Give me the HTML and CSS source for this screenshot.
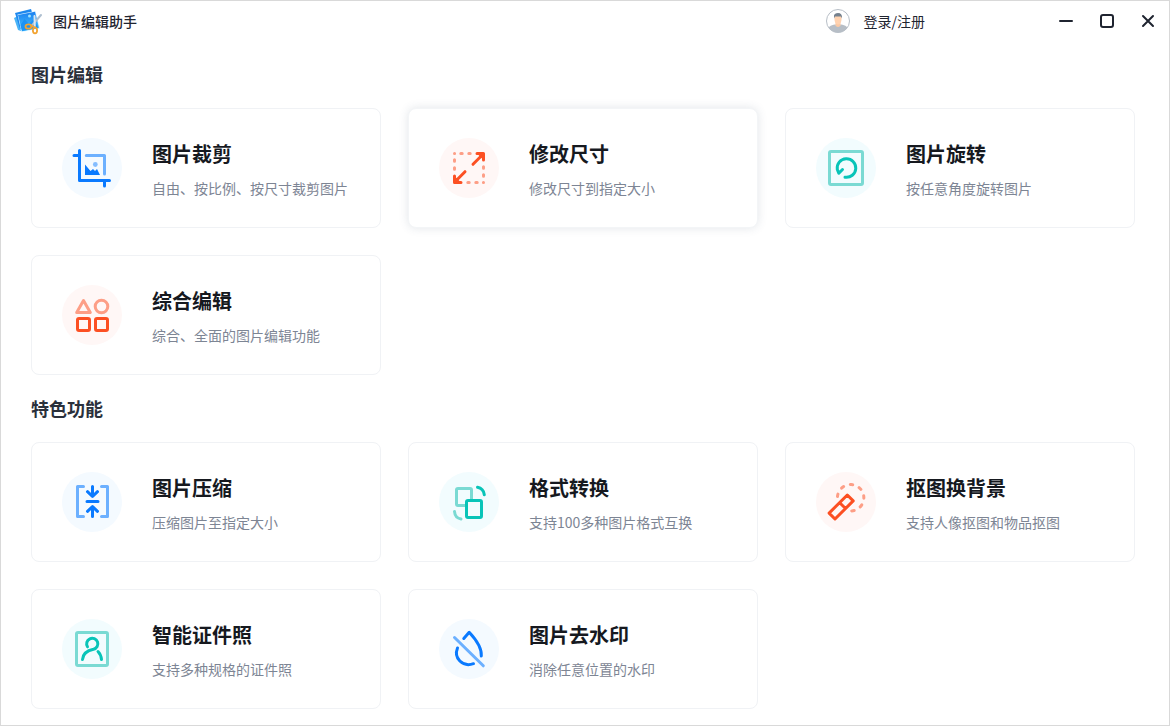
FILE: index.html
```html
<!DOCTYPE html>
<html lang="zh-CN">

<head>
    <meta charset="utf-8" />
    <title>图片编辑助手</title>
    <meta name="viewport" content="width=device-width, initial-scale=1">
    <link rel="stylesheet" href="styles.css">
</head>

<body>
    <header class="titlebar">
        <svg class="logo" viewBox="0 0 28 28" aria-hidden="true">
            <defs>
                <linearGradient id="photo" x1="0" y1="0" x2="0" y2="1">
                    <stop offset="0" stop-color="#1b7ff0" />
                    <stop offset="1" stop-color="#45c6ff" />
                </linearGradient>
            </defs>
            <path d="M0 11L4 9L7 24L4 23Z" fill="#4bb4f7" />
            <path d="M1 6L17 2L22 18L6 22Z" fill="#1e88ee" />
            <path d="M3.5 7.5L21.5 4L26 21.5L7.5 25Z" fill="#d9f1ff" />
            <path d="M4 8L21 4.7L25 21L8 24.3Z" fill="url(#photo)" />
            <path d="M6.5 18L10.500 12L15 17L18.500 13L23.5 18.500L24 21L8 24Z" fill="#1c93f5" />
            <circle cx="15.5" cy="9" r="1.500" fill="#9fe2ff" />
            <path d="M27 8L17.5 19" stroke="#aebfd0" stroke-width="2" stroke-linecap="round" />
            <path d="M20.5 9L20.8 19" stroke="#dce6ee" stroke-width="2" stroke-linecap="round" />
            <g fill="none" stroke="#f2a331" stroke-width="1.8">
                <ellipse cx="14.5" cy="19.5" rx="3" ry="2.2" />
                <ellipse cx="21" cy="23.5" rx="2.1" ry="2.8" />
                <path d="M17 18.5L21 20.5" />
            </g>
        </svg>
        <h1 class="app-name">图片编辑助手</h1>
        <a href="#login" class="login">
            <svg class="avatar" viewBox="0 0 24 24" aria-hidden="true">
                <defs>
                    <clipPath id="face"><circle cx="12" cy="12" r="11.5" /></clipPath>
                </defs>
                <circle cx="12" cy="12" r="11.5" fill="#fff" />
                <g clip-path="url(#face)">
                    <path d="M0 24C1 18 5 16 9 15.5H15C19 16 23 18 24 24Z" fill="#b7bec6" />
                    <path d="M9.5 13H14.5V16.5Q12 19.5 9.5 16.5Z" fill="#fbc9a5" />
                    <path d="M8.5 7H15.5V11Q15 15 12 15.5Q9 15 8.5 11Z" fill="#ffd2b0" />
                    <path d="M8 9.5V6.5Q8.5 4 12 4Q16.5 4 16 9.5L15 7.5H9Z" fill="#75818e" />
                </g>
                <circle cx="12" cy="12" r="11.5" fill="none" stroke="#b7bec6" />
            </svg>
            登录/注册
        </a>
        <div class="window-buttons">
            <button type="button" aria-label="最小化">
                <svg viewBox="0 0 16 16"><path d="M2 8H14" /></svg>
            </button>
            <button type="button" aria-label="最大化">
                <svg viewBox="0 0 16 16"><rect x="2" y="2" width="12" height="12" rx="2" /></svg>
            </button>
            <button type="button" aria-label="关闭">
                <svg viewBox="0 0 16 16"><path d="M3 3L13 13M13 3L3 13" /></svg>
            </button>
        </div>
    </header>

    <main class="content">
        <section class="group">
            <h2>图片编辑</h2>
            <div class="cards">
                <a href="#crop" class="card">
                    <svg class="icon blue" viewBox="0 0 60 60" aria-hidden="true">
                        <path class="light" d="M24.3 17.5H42.5V36" />
                        <path d="M12 17.5H17.5M17.5 12.5V42.5H47.5M42.5 42.5V48" />
                        <circle class="light-dot" cx="33.3" cy="26.5" r="2.4" />
                        <path class="solid" d="M23 26.5L28.5 33L31 31L33 33L35 31L38 37H23Z" />
                    </svg>
                    <div class="text">
                        <h3>图片裁剪</h3>
                        <p>自由、按比例、按尺寸裁剪图片</p>
                    </div>
                </a>
                <a href="#resize" class="card active">
                    <svg class="icon red" viewBox="0 0 60 60" aria-hidden="true">
                        <path class="light" d="M15.5 15.5H15.6M21.8 15.5H23.2M29.8 15.5H31.2M15.5 21.8V23.2M15.5 29.8V31.2M28.8 44.5H30.2M36.8 44.5H38.2M44.5 28.8V30.2M44.5 36.8V38.2M44.4 44.5H44.5" />
                        <path d="M34 26.3L43 17.3M38 15.5H44.5V22M26 33.7L17 42.7M15.5 38V44.5H22" />
                        <path class="solid" d="M38 15.5H44.5V22ZM15.5 38V44.5H22Z" />
                    </svg>
                    <div class="text">
                        <h3>修改尺寸</h3>
                        <p>修改尺寸到指定大小</p>
                    </div>
                </a>
                <a href="#rotate" class="card">
                    <svg class="icon teal" viewBox="0 0 60 60" aria-hidden="true">
                        <rect class="light" x="13.5" y="13.5" width="33" height="33" rx="1.5" />
                        <path d="M29 39.2A9.3 9.3 0 1 0 21.3 31.5L22.8 35.3L26.5 31.5" />
                    </svg>
                    <div class="text">
                        <h3>图片旋转</h3>
                        <p>按任意角度旋转图片</p>
                    </div>
                </a>
                <a href="#edit" class="card">
                    <svg class="icon red" viewBox="0 0 60 60" aria-hidden="true">
                        <path class="light" d="M21.5 15.5L28.3 27.5H14.7Z" />
                        <circle class="light" cx="39.5" cy="21.5" r="6.3" />
                        <rect x="15.5" y="33.5" width="12" height="12" rx="1.5" />
                        <rect x="33.5" y="33.5" width="12" height="12" rx="1.5" />
                    </svg>
                    <div class="text">
                        <h3>综合编辑</h3>
                        <p>综合、全面的图片编辑功能</p>
                    </div>
                </a>
            </div>
        </section>

        <section class="group">
            <h2>特色功能</h2>
            <div class="cards">
                <a href="#compress" class="card">
                    <svg class="icon blue" viewBox="0 0 60 60" aria-hidden="true">
                        <path class="light" d="M21.5 14.5H15.5V44.5H21.5M39.5 14.5H45.5V44.5H39.5" />
                        <path d="M30.5 14.5V24M25.5 19.7L30.5 24.5L35.5 19.7M25 29.5H36M30.5 44.5V35M25.5 39.3L30.5 34.5L35.5 39.3" />
                    </svg>
                    <div class="text">
                        <h3>图片压缩</h3>
                        <p>压缩图片至指定大小</p>
                    </div>
                </a>
                <a href="#convert" class="card">
                    <svg class="icon teal" viewBox="0 0 60 60" aria-hidden="true">
                        <rect class="light" x="17.5" y="16.5" width="15" height="17" rx="1.5" />
                        <path class="light" d="M15.5 39.5Q16 46 22 47" />
                        <rect class="cover" x="27.5" y="28.5" width="15" height="17" rx="1.5" />
                        <path d="M38.5 15.3Q44.5 16.5 45.3 22.7" />
                    </svg>
                    <div class="text">
                        <h3>格式转换</h3>
                        <p>支持100多种图片格式互换</p>
                    </div>
                </a>
                <a href="#cutout" class="card">
                    <svg class="icon red" viewBox="0 0 60 60" aria-hidden="true">
                        <path class="light" d="M21.5 24.5A13.2 13.2 0 1 1 35.6 38.9" stroke-dasharray="2.5 7" />
                        <path d="M31.3 23L37.2 28.9L19 47L13.1 41.1ZM24.2 31.2L29.3 36.3" />
                    </svg>
                    <div class="text">
                        <h3>抠图换背景</h3>
                        <p>支持人像抠图和物品抠图</p>
                    </div>
                </a>
                <a href="#id-photo" class="card">
                    <svg class="icon teal" viewBox="0 0 60 60" aria-hidden="true">
                        <rect class="light" x="14.5" y="13.5" width="31" height="33" rx="1.5" />
                        <path d="M25.5 27.8A5.6 5.6 0 1 1 31.5 30.3C25.5 31.5 21 34 20.5 40.5M36 32.5Q39 35.5 39.5 40.5" />
                    </svg>
                    <div class="text">
                        <h3>智能证件照</h3>
                        <p>支持多种规格的证件照</p>
                    </div>
                </a>
                <a href="#watermark" class="card">
                    <svg class="icon blue" viewBox="0 0 60 60" aria-hidden="true">
                        <path d="M24.8 19.5L30.2 13.3C36 19.5 43 28 42.3 37M18.5 29C14.5 39 23.5 48.5 34.5 44.7" />
                        <path class="light" d="M15.5 18.5L44.3 46.8" />
                    </svg>
                    <div class="text">
                        <h3>图片去水印</h3>
                        <p>消除任意位置的水印</p>
                    </div>
                </a>
            </div>
        </section>
    </main>
</body>

</html>
```
FILE: styles.css
```css
* {
    box-sizing: border-box;
}

body {
    min-height: 100vh;
    margin: 0;
    border: 1px solid #d9d9d9;
    background-color: #fff;
    color: #1f2430;
    font-family: "Noto Sans CJK SC", sans-serif;
    font-size: 14px;
}

h1,
h2,
h3,
p {
    margin: 0;
}

a {
    color: inherit;
    text-decoration: none;
}

.titlebar {
    display: flex;
    align-items: center;
    height: 40px;
    padding: 0 1px 0 13px;
}

.logo {
    width: 28px;
    height: 28px;
    margin-right: 11px;
}

.app-name {
    margin-right: auto;
    font-size: 14px;
    font-weight: 500;
    line-height: 20px;
}

.login {
    display: flex;
    align-items: center;
    gap: 14px;
    margin-right: 120px;
    line-height: 20px;
}

.avatar {
    width: 24px;
    height: 24px;
}

.window-buttons {
    display: flex;
}

.window-buttons button {
    display: flex;
    align-items: center;
    justify-content: center;
    width: 41px;
    height: 40px;
    padding: 0;
    border: 0;
    background: none;
}

.window-buttons svg {
    width: 16px;
    height: 16px;
    fill: none;
    stroke: #1f2430;
    stroke-width: 2;
    stroke-linecap: round;
}

.content {
    display: flex;
    flex-direction: column;
    gap: 21px;
    padding: 21px 34px 16px 30px;
}

.group h2 {
    margin-bottom: 22px;
    color: #2a303b;
    font-size: 18px;
    font-weight: bold;
    line-height: 24px;
}

.cards {
    display: grid;
    grid-template-columns: repeat(3, 1fr);
    gap: 27px;
}

.card {
    display: flex;
    align-items: center;
    gap: 30px;
    height: 120px;
    padding: 0 30px;
    border: 1px solid #f0f2f5;
    border-radius: 8px;
    background-color: #fff;
}

.card.active,
.card:hover {
    border-color: #f3f5f7;
    box-shadow: 0 0 10px rgba(60, 80, 110, 0.15);
}

.text h3 {
    color: #16191f;
    font-size: 20px;
    font-weight: bold;
    line-height: 32px;
}

.text p {
    margin-top: 8px;
    color: #7d8594;
    line-height: 20px;
    white-space: nowrap;
}

.icon {
    flex: none;
    width: 60px;
    height: 60px;
    border-radius: 50%;
    fill: none;
    stroke: currentColor;
    stroke-width: 3;
    stroke-linecap: round;
    stroke-linejoin: round;
}

.blue {
    background-color: #f4faff;
    color: #0a7aff;
}

.red {
    background-color: #fff7f6;
    color: #fc5023;
}

.teal {
    background-color: #f2fcfe;
    color: #08c4b8;
}

.blue .light {
    stroke: #6cb0ff;
}

.red .light {
    stroke: #fd9e86;
}

.teal .light {
    stroke: #7adad3;
}

.light-dot {
    fill: #84bdff;
    stroke: none;
}

.solid {
    fill: currentColor;
    stroke: none;
}

.cover {
    fill: #f2fcfe;
}
```
